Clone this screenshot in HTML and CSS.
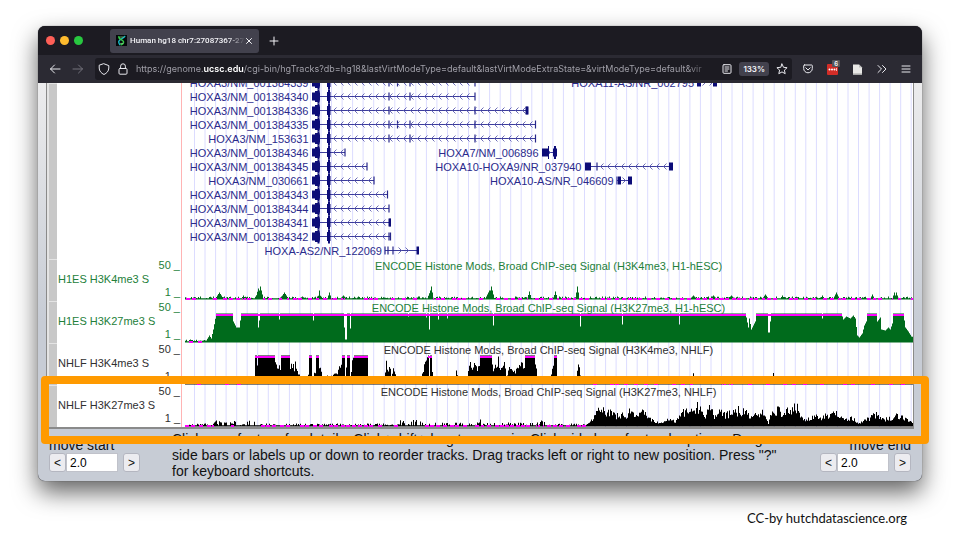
FILE: index.html
```html
<!DOCTYPE html>
<html lang="en">
<head>
<meta charset="utf-8">
<title>Human hg18 chr7:27087367-27</title>
<link rel="stylesheet" href="styles.css">
</head>
<body>
<main class="stage">
  <section class="window">
    <header class="tabbar">
      <div class="lights"><i class="light red"></i><i class="light amber"></i><i class="light green"></i></div>
      <div class="tab">
        <svg class="favicon" viewBox="0 0 12 12" aria-hidden="true">
          <rect width="12" height="12" fill="#05080a"/>
          <path d="M9.800 1C9.500 3.600 3.600 4.200 3 7c-.4 1.800.6 3 1.400 4" fill="none" stroke="#18b8c4" stroke-width="1.600"/>
          <path d="M3.200 1.200C2.600 3.400 4.400 4.600 6.500 5.600 9.600 7.200 8.500 9.600 5 11" fill="none" stroke="#35c94a" stroke-width="1.600"/>
          <path d="M4.500 2.200h4M4.500 9.200h3.400" stroke="#8fe08f" stroke-width=".8"/>
        </svg>
        <span class="tab-title">Human hg18 chr7:27087367-27</span>
        <button class="bare close" aria-label="Close tab"><svg viewBox="0 0 8 8"><path d="M1.500 1.500l5 5m0-5l-5 5"/></svg></button>
      </div>
      <button class="bare new-tab" aria-label="New tab"><svg viewBox="0 0 10 10"><path d="M5 1v8M1 5h8"/></svg></button>
    </header>

    <nav class="toolbar">
      <button class="bare" aria-label="Back"><svg class="icon" viewBox="0 0 12 12"><path d="M11 6H1.500M5.500 2L1.500 6l4 4"/></svg></button>
      <button class="bare dim" aria-label="Forward"><svg class="icon" viewBox="0 0 12 12"><path d="M1 6h9.500M6.500 2l4 4-4 4"/></svg></button>
      <div class="urlbar">
        <svg class="icon" viewBox="0 0 12 12" aria-hidden="true"><path d="M6 .8L10.800 2.600V5c0 3-2 5.200-4.800 6.500C3.200 10.200 1.200 8 1.200 5V2.600z"/></svg>
        <svg class="icon" viewBox="0 0 12 12" aria-hidden="true"><rect x="2" y="5.500" width="8" height="5.700" rx="1"/><path d="M3.600 5.500V3.200a2.400 2.400 0 0 1 4.800 0v2.300"/></svg>
        <div class="url" role="textbox" aria-label="Address" tabindex="0">https://genome.<b>ucsc.edu</b>/cgi-bin/hgTracks?db=hg18&amp;lastVirtModeType=default&amp;lastVirtModeExtraState=&amp;virtModeType=default&amp;vir</div>
        <button class="bare" aria-label="Reader view"><svg class="icon small" viewBox="0 0 10 10"><rect x="1" y=".7" width="8" height="8.600" rx="1"/><path d="M3 3h4M3 5h4M3 7h2.500"/></svg></button>
        <button class="zoom">133%</button>
        <button class="bare" aria-label="Bookmark"><svg class="icon" viewBox="0 0 12 12"><path d="M6 1l1.500 3.300 3.600.4-2.700 2.400.8 3.600L6 8.900l-3.200 1.800.8-3.600L.9 4.700l3.600-.4z"/></svg></button>
      </div>
      <div class="extras">
        <button class="bare" aria-label="Save to Pocket"><svg class="icon small" viewBox="0 0 10 10"><path d="M1.400 1h7.200q.7 0 .7.700V4.500a4.300 4.300 0 0 1-8.600 0V1.700Q.7 1 1.400 1z"/><path d="M2.800 3.800L5 6l2.200-2.200"/></svg></button>
        <button class="bare lastpass" aria-label="Passwords"><svg class="ext" viewBox="0 0 11 11"><rect width="11" height="11" rx="1" fill="#d32d27"/><g fill="#fff"><circle cx="2.500" cy="5.500" r="1"/><circle cx="5" cy="5.500" r="1"/><circle cx="7.500" cy="5.500" r="1"/><rect x="9" y="4" width=".7" height="3"/></g></svg><span class="badge">6</span></button>
        <button class="bare" aria-label="Notes"><svg class="ext" viewBox="0 0 11 11"><path d="M1 .5h6L10 3.500v7H1z" fill="#e8e8e6"/><path d="M7 .5L10 3.500H7z" fill="#bbb"/><path d="M1 10.500V9h9v1.500z" fill="#c4c4c2"/></svg></button>
        <button class="bare" aria-label="More tools"><svg class="icon small" viewBox="0 0 10 10"><path d="M1 1.500L4.500 5 1 8.500M5.500 1.500L9 5 5.500 8.500"/></svg></button>
        <button class="bare" aria-label="Menu"><svg class="icon small" viewBox="0 0 10 10"><path d="M1 2h8M1 5h8M1 8h8"/></svg></button>
      </div>
    </nav>

    <div class="page">
      <div class="tracks">
        <div class="track">
          <i class="sidebar"></i><div class="label"></div>
          <svg class="chart" id="genes" viewBox="0 0 731 176"></svg>
        </div>
        <div class="track esc">
          <i class="sidebar"></i>
          <div class="label"><span>H1ES H3K4me3 S</span><div class="axis"><span>50 _</span><span>1 _</span></div></div>
          <svg class="chart" id="esc-k4" viewBox="0 0 731 42"></svg>
        </div>
        <div class="track esc">
          <i class="sidebar"></i>
          <div class="label"><span>H1ES H3K27me3 S</span><div class="axis"><span>50 _</span><span>1 _</span></div></div>
          <svg class="chart" id="esc-k27" viewBox="0 0 731 42"></svg>
        </div>
        <div class="track nhlf">
          <i class="sidebar"></i>
          <div class="label"><span>NHLF H3K4me3 S</span><div class="axis"><span>50 _</span><span>1 _</span></div></div>
          <svg class="chart" id="nhlf-k4" viewBox="0 0 731 42"></svg>
        </div>
        <div class="track nhlf">
          <i class="sidebar"></i>
          <div class="label"><span>NHLF H3K27me3 S</span><div class="axis"><span>50 _</span><span>1 _</span></div></div>
          <svg class="chart" id="nhlf-k27" viewBox="0 0 731 42"></svg>
        </div>
      </div>
      <footer class="controls">
        <div class="mover">
          <label for="start">move start</label>
          <div class="stepper"><button>&lt;</button><input id="start" type="text" value="2.0"><button class="next">&gt;</button></div>
        </div>
        <p class="hint">Click on a feature for details. Click+shift+drag to zoom in. Click side bars for track options. Drag side bars or labels up or down to reorder tracks. Drag tracks left or right to new position. Press "?" for keyboard shortcuts.</p>
        <div class="mover end">
          <label for="end">move end</label>
          <div class="stepper"><button>&lt;</button><input id="end" type="text" value="2.0"><button class="next">&gt;</button></div>
        </div>
      </footer>
    </div>
  </section>
  <div class="highlight"></div>
</main>
<p class="credit">CC-by hutchdatascience.org</p>
<script src="main.js"></script>
</body>
</html>
```
FILE: styles.css
```css
* { box-sizing: border-box; }

body {
  margin: 0;
  background: #fff;
  font-family: "Liberation Sans", Arial, sans-serif;
  overflow-x: hidden;
}

.stage {
  position: relative;
  padding: 26px 38px 0;
}

.window {
  overflow: hidden;
  border-radius: 7px;
  background: #2b2a33;
  box-shadow: 0 0 1px rgba(0, 0, 0, .7), 0 11px 24px rgba(0, 0, 0, .62);
}

button, input { font-family: inherit; margin: 0; }

.bare {
  display: flex;
  padding: 0;
  border: 0;
  background: none;
  color: inherit;
}

.bare svg, .icon {
  fill: none;
  stroke: currentColor;
  stroke-linecap: round;
  stroke-linejoin: round;
}

.tabbar {
  display: flex;
  align-items: center;
  height: 29px;
  padding-left: 8px;
  background: #1c1b22;
  color: #f4f4f8;
}

.lights { display: flex; gap: 5px; margin-right: 27px; }
.light { width: 9px; height: 9px; border-radius: 50%; }
.red { background: #fe5f57; }
.amber { background: #febb2e; }
.green { background: #28c840; }

.tab {
  display: flex;
  align-items: center;
  width: 149px;
  height: 24px;
  padding: 0 6px 0 6px;
  border-radius: 3px;
  background: #42414d;
}

.favicon { width: 11px; height: 11px; margin-right: 3px; }

.tab-title {
  flex: 1;
  overflow: hidden;
  white-space: nowrap;
  font: 500 8px/12px Roboto, sans-serif;
  -webkit-mask-image: linear-gradient(to right, #000 85%, transparent);
  mask-image: linear-gradient(to right, #000 85%, transparent);
}

.close svg { width: 8px; height: 8px; }
.new-tab { margin-left: 10px; }
.new-tab svg { width: 10px; height: 10px; }

.toolbar {
  display: flex;
  align-items: center;
  height: 28px;
  padding: 0 11px;
  gap: 11px;
  color: #e9e9ee;
}

.icon { width: 12px; height: 12px; flex: none; }
.icon.small { width: 10px; height: 10px; }
.dim { color: #74737d; }

.urlbar {
  display: flex;
  align-items: center;
  flex: 1;
  min-width: 0;
  height: 22px;
  padding: 0 4px 0 3px;
  gap: 7px;
  border-radius: 3px;
  background: #1c1b22;
}

.url {
  flex: 1;
  overflow: hidden;
  white-space: nowrap;
  color: #a09fa8;
  font: 400 9px/14px Inter, sans-serif;
  -webkit-mask-image: linear-gradient(to right, #000 95%, transparent);
  mask-image: linear-gradient(to right, #000 95%, transparent);
}

.url b { color: #fff; font-weight: 600; }

.zoom {
  height: 14px;
  padding: 0 4px;
  border: 0;
  border-radius: 3px;
  background: #42414d;
  color: #f4f4f8;
  font: 600 8px/14px Inter, sans-serif;
}

.extras { display: flex; align-items: center; gap: 14px; }
.ext { width: 11px; height: 11px; }
.bare .ext { stroke: none; }
.lastpass { position: relative; }

.badge {
  position: absolute;
  top: -4px;
  right: -2px;
  padding: 0 2px;
  border-radius: 1px;
  background: #55555a;
  color: #fff;
  font: 600 6px/7px Inter, sans-serif;
}

.page { background: linear-gradient(#ececed, #c7ccd5 60%, #c7ccd5); }

.tracks {
  margin: 0 8px;
  border: solid #8a8a8a;
  border-width: 0 1px 2px;
  background: #fff;
}

.track { display: grid; grid-template-columns: 10px 125px 1fr; }

.sidebar {
  border: solid #e4e4e4;
  border-width: 1px 0 0 2px;
  background: #c8c8c8;
}

.label {
  display: flex;
  align-items: center;
  justify-content: space-between;
  padding: 0 1px 2px;
  border-right: 1px solid #ffb4b4;
  font-size: 11px;
  line-height: 13px;
  white-space: nowrap;
}

.axis {
  display: flex;
  flex-direction: column;
  justify-content: space-between;
  align-self: stretch;
  text-align: right;
}

.esc { color: #23803a; }
.nhlf { color: #303030; }

.chart { display: block; width: 100%; height: auto; font-size: 11px; }
.chart text { fill: currentColor; }
#genes { color: #2a2a8c; }

.controls {
  display: flex;
  align-items: flex-start;
  padding: 2px 11px;
  color: #111;
}

.mover { padding-top: 7px; }
.mover label { display: block; font-size: 14px; line-height: 15px; }
.end label { text-align: right; }
.stepper { display: flex; height: 19px; }

.stepper button {
  width: 17px;
  padding: 0;
  border: 1px solid #b4b6c0;
  border-radius: 3px;
  background: #ececf0;
  color: #111;
  font-size: 12px;
}

.stepper input {
  width: 52px;
  padding: 0 3px;
  border: 1px solid #c0c2ca;
  background: #fff;
  font-size: 12px;
}

.stepper .next { margin-left: 5px; }

.hint {
  flex: 1;
  margin: 0 32px;
  font-size: 14px;
  line-height: 16px;
}

.highlight {
  position: absolute;
  left: 41px;
  right: 31px;
  bottom: 37px;
  height: 68px;
  border: 8px solid #ff9a00;
  border-radius: 4px;
}

.credit {
  margin: 28px 53px 0;
  text-align: right;
  color: #111;
  font: 13px/18px Lato, sans-serif;
}
```
FILE: main.js
```js
// Chart x values are image columns; the chart's own origin is column 182.
const ORIGIN = 182, FIRST = 185, LAST = 913, BASE = 41, FULL = 28;
const MAGENTA = '#ff00ff', NAVY = '#0c0c78';

function random(seed) {
  return () => (seed = (seed * 16807) % 2147483647) / 2147483647;
}

function grid(height) {
  let d = '';
  for (let x = 194.5; x < LAST; x += 10.54) d += `M${(x - ORIGIN).toFixed(1)} 0V${height}`;
  return `<path d="${d}" stroke="#dcdcff" fill="none"/>`;
}

const box = (x, y, w, h, fill) =>
  `<rect x="${x - ORIGIN}" y="${y}" width="${w}" height="${h}" fill="${fill}"/>`;

// ---- Gene models: label, label end, line start/end, ticks, blocks, direction
const hoxa3 = (id, end, ticks = [], blocks = []) => ({
  label: 'HOXA3/NM_' + id, at: 308.5, from: 318, to: end, ticks: [...ticks, end], dir: -1,
  blocks: [[312, 8, 8], [315, 4.5, 11], [317.5, 2, 14], [327, 3.5, 9], [328, 2, 14], ...blocks]
});

const rows = [
  [hoxa3('001384339', 475, [389, 397.5, 410]),
   { label: 'HOXA11-AS/NR_002795', at: 694, from: 697, to: 716, ticks: [], dir: 1, blocks: [[697, 4, 8], [713, 4, 8]] }],
  [hoxa3('001384340', 475, [389, 410])],
  [hoxa3('001384336', 527, [389, 475], [[525.5, 3, 8]])],
  [hoxa3('001384335', 535.5, [389, 397.5, 410, 475])],
  [hoxa3('153631', 535.5, [389, 410, 475])],
  [hoxa3('001384346', 345),
   { label: 'HOXA7/NM_006896', at: 538.5, from: 542, to: 556, ticks: [], dir: 1, blocks: [[542, 6, 8], [548, 1, 13], [553, 1, 8], [554, 2, 13], [556, 1, 8]] }],
  [hoxa3('001384345', 367),
   { label: 'HOXA10-HOXA9/NR_037940', at: 581.5, from: 585, to: 672, ticks: [597], dir: -1, blocks: [[585, 6, 8], [669, 4, 8]] }],
  [hoxa3('030661', 374),
   { label: 'HOXA10-AS/NR_046609', at: 613.5, from: 617, to: 631, ticks: [617], dir: 1, blocks: [[618, 3, 8], [628, 4, 8]] }],
  [hoxa3('001384343', 387.5)],
  [hoxa3('001384344', 389)],
  [hoxa3('001384341', 390, [], [[388.5, 2.5, 8]])],
  [hoxa3('001384342', 390.5, [389])],
  [{ label: 'HOXA-AS2/NR_122069', at: 382, from: 385, to: 418, ticks: [385, 388, 393], dir: 1, blocks: [[416.5, 2.5, 8]] }]
];

function drawGenes() {
  let out = grid(176);
  rows.forEach((row, i) => {
    const y = 13.5 + (i - 1) * 14;
    for (const g of row) {
      out += `<text x="${g.at - ORIGIN}" y="${y + 4}" text-anchor="end">${g.label}</text>`;
      out += `<path d="M${g.from - ORIGIN} ${y}H${g.to - ORIGIN}" stroke="#3c3c9c"/>`;
      let ticks = '', arrows = '';
      for (const t of g.ticks) ticks += `M${t - ORIGIN} ${y - 4}v8`;
      const first = g.to - g.from > 26 ? 16 : 8;
      for (let x = g.from + first; x < g.to - 3; x += 7) {
        arrows += `M${x - ORIGIN - g.dir * 2.5} ${y - 3}l${g.dir * 3} 3l${-g.dir * 3} 3`;
      }
      out += `<path d="${ticks}" stroke="#26268a" stroke-width="1.200" fill="none"/>`;
      out += `<path d="${arrows}" stroke="#5c5cb0" stroke-width=".9" fill="none"/>`;
      for (const [x, w, h] of g.blocks) out += box(x, y - h / 2, w, h, NAVY);
    }
  });
  document.getElementById('genes').innerHTML = out;
}

// ---- Signal tracks: points are [column, height]; heights are linear between points
function heightAt(points, x) {
  for (let i = 1; i < points.length; i++) {
    const [x1, h1] = points[i - 1], [x2, h2] = points[i];
    if (x >= x1 && x < x2) return h1 + (h2 - h1) * (x - x1) / (x2 - x1);
  }
  return 0;
}

function drawSignal({ id, title, color, points, peaks = [], notches = [], jag = 0, noise, quiet, seed, base = BASE }) {
  const rnd = random(seed);
  let d = '', caps = '', dots = '', run = 0;
  for (let x = FIRST; x <= LAST; x++) {
    let h = heightAt(points, x);
    if (h < FULL) h *= 1 - jag * rnd();
    for (const [px, ph, pw] of peaks) h = Math.max(h, ph * (1 - Math.abs(x - px) / pw));
    const level = noise(x);
    if (rnd() < .55) h = Math.max(h, level * rnd());
    if (h >= FULL) { h = FULL; caps += `M${x - ORIGIN} ${base - FULL + 1}h1`; }
    for (const [nx, nw, nh] of notches) {
      if (x >= nx && x < nx + nw) { h = nh; }
    }
    d += `M${x - ORIGIN} ${base}v${(-h - .5).toFixed(1)}h1V${base}z`;
    if (run-- <= 0 && rnd() < quiet(x)) run = 4;
    if (run > 0 && h < 3) dots += `M${x - ORIGIN} ${base}h1`;
  }
  const svg = document.getElementById(id);
  svg.innerHTML = grid(42) +
    `<path d="${d}" fill="${color}"/>` +
    `<path d="M${FIRST - ORIGIN} ${base}H${LAST - ORIGIN}" stroke="${color}" stroke-width="1"/>` +
    `<path d="${dots}" stroke="${MAGENTA}" stroke-width="2"/>` +
    `<path d="${caps}" stroke="${MAGENTA}" stroke-width="2"/>` +
    `<text x="${548.5 - ORIGIN}" y="11" text-anchor="middle">ENCODE Histone Mods, Broad ChIP-seq Signal (${title})</text>`;
}

drawGenes();

drawSignal({
  id: 'esc-k4', title: 'H3K4me3, H1-hESC', color: '#006b1c', seed: 71, points: [], base: 40,
  peaks: [[219, 6, 4], [243, 3, 2], [258, 10, 3], [260, 12, 3], [284, 6, 4], [302, 2, 3], [319, 8, 1.5], [329, 6, 2], [343, 3, 3],
    [430, 8, 3], [431, 12, 2], [489, 8, 4], [491, 12, 3], [529, 7, 2], [555, 7, 2], [577, 12, 2], [693, 3, 3], [713, 3, 3],
    [731, 3, 3], [765, 4, 3], [782, 3, 2], [822, 3, 2], [836, 6, 3], [872, 4, 2], [894, 6, 2], [896, 6, 2]],
  noise: () => 2, quiet: () => .2
});

drawSignal({
  id: 'esc-k27', title: 'H3K27me3, H1-hESC', color: '#006b1c', seed: 19,
  points: [[185, 0], [206, 1], [209, 6], [211, 3], [213, 12], [216, 28], [232, 28], [233, 20], [236, 14], [239, 14], [241, 28],
    [745, 28], [746, 24], [748, 14], [749, 23], [751, 12], [753, 16], [755, 20], [756, 28], [841, 28], [843, 22], [846, 25],
    [850, 23], [853, 26], [855, 23], [857, 6], [859, 4], [862, 8], [864, 16], [866, 20], [867, 28], [876, 28], [877, 20],
    [880, 24], [881, 12], [885, 11], [888, 14], [890, 12], [892, 18], [893, 28], [903, 28], [905, 14], [908, 10], [911, 5], [914, 4]],
  notches: [[258, 1, 14], [259, 1, 21], [279, 1, 22], [313, 1, 21], [344, 1, 14], [345, 2, 2], [350, 1, 13], [408, 1, 25],
    [426, 1, 24], [429, 1, 12], [438, 1, 22], [447, 1, 23], [493, 1, 16], [580, 1, 15], [622, 1, 17], [679, 1, 17],
    [768, 2, 9], [770, 1, 20], [822, 1, 23]],
  noise: () => 2, quiet: x => x < 205 ? .15 : 0
});

drawSignal({
  id: 'nhlf-k4', title: 'H3K4me3, NHLF', color: '#000', seed: 43, jag: .3,
  points: [[254, 0], [255, 28], [274, 28], [276, 20], [280, 18], [281, 28], [289, 28], [290, 20], [293, 21], [294, 14], [295, 24],
    [298, 10], [304, 6], [308, 9], [309, 28], [311, 28], [312, 6], [315, 14], [316, 28], [318, 28], [319, 20], [322, 8],
    [332, 8], [338, 14], [342, 28], [344, 28], [345, 8], [347, 28], [349, 28], [350, 6], [352, 24], [354, 28], [367, 28], [368, 4],
    [384, 4], [386, 25], [388, 12], [389, 22], [391, 8], [393, 17], [395, 11], [397, 3], [421, 5], [424, 22], [428, 28], [429, 28],
    [430, 28], [431, 28], [433, 4], [454, 3], [456, 13], [458, 4], [467, 8], [469, 25], [472, 18], [474, 25], [477, 18], [480, 28],
    [491, 28], [493, 16], [496, 20], [498, 27], [500, 16], [504, 25], [506, 8], [510, 20], [515, 14], [520, 24], [524, 20],
    [525, 28], [534, 28], [536, 18], [537, 4], [550, 7], [553, 24], [554, 28], [556, 28], [557, 6], [560, 1], [575, 2], [577, 14],
    [578, 26], [579, 20], [581, 2], [692, 3], [693, 11], [695, 4], [772, 2], [773, 11], [775, 2]],
  notches: [[257, 1, 18], [429, 1, 4]],
  noise: () => 3, quiet: x => x < 250 || x > 580 ? .1 : .02
});

drawSignal({
  id: 'nhlf-k27', title: 'H3K27me3, NHLF', color: '#000', seed: 97, jag: .55,
  points: [[586, 0], [590, 6], [595, 14], [600, 22], [606, 18], [612, 19], [616, 13], [622, 14], [626, 10], [630, 20], [634, 15],
    [637, 11], [645, 20], [650, 9], [655, 5], [660, 4], [668, 8], [675, 5], [682, 17], [690, 18], [699, 26], [703, 12], [709, 21],
    [714, 14], [720, 17], [726, 14], [732, 16], [739, 20], [745, 16], [750, 14], [758, 13], [762, 18], [766, 9], [768, 2],
    [770, 15], [776, 21], [782, 16], [790, 19], [798, 26], [801, 12], [805, 7], [815, 11], [825, 12], [834, 17], [840, 10],
    [845, 7], [852, 10], [858, 2], [862, 6], [870, 10], [875, 15], [880, 9], [890, 9], [897, 14], [905, 8], [914, 2]],
  noise: x => x < 213 ? 2 : x < 256 ? 5 : x < 400 ? 2 : x < 424 ? 6 : x < 478 ? 3 : x < 482 ? 7 : x < 530 ? 3 : x < 556 ? 5 : x < 590 ? 2 : 3,
  quiet: x => x > 590 ? 0 : (x > 213 && x < 256) || (x > 400 && x < 424) ? .02 : .35
});
```
